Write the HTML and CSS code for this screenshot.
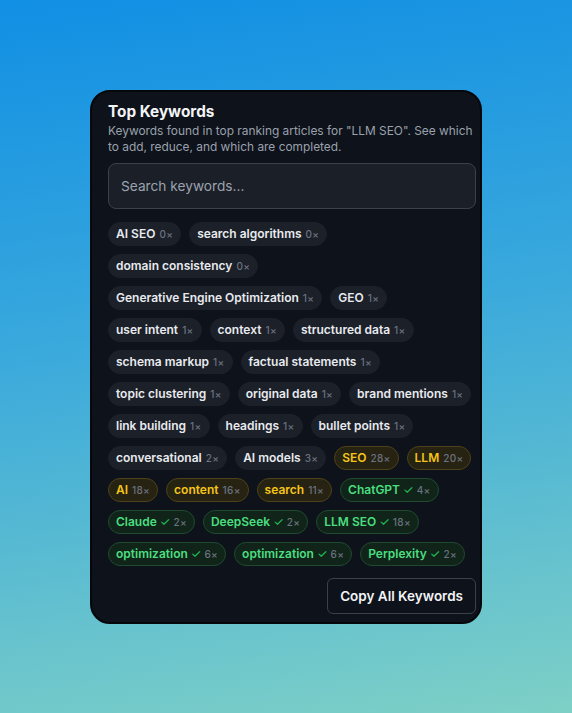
FILE: index.html
```html
<!DOCTYPE html>
<html>
<head>
    <link rel="stylesheet" href="styles.css">
</head>
<body>
    <div class="card">
        <h2 class="title">Top Keywords</h2>
        <p class="desc">Keywords found in top ranking articles for "LLM SEO". See which to add, reduce, and which are completed.</p>
        <input class="search" type="text" placeholder="Search keywords...">

        <div class="tags">
            <span class="tag">AI SEO <small>0×</small></span>
            <span class="tag">search algorithms <small>0×</small></span>
            <span class="tag">domain consistency <small>0×</small></span>
            <span class="tag">Generative Engine Optimization <small>1×</small></span>
            <span class="tag">GEO <small>1×</small></span>
            <span class="tag">user intent <small>1×</small></span>
            <span class="tag">context <small>1×</small></span>
            <span class="tag">structured data <small>1×</small></span>
            <span class="tag">schema markup <small>1×</small></span>
            <span class="tag">factual statements <small>1×</small></span>
            <span class="tag">topic clustering <small>1×</small></span>
            <span class="tag">original data <small>1×</small></span>
            <span class="tag">brand mentions <small>1×</small></span>
            <span class="tag">link building <small>1×</small></span>
            <span class="tag">headings <small>1×</small></span>
            <span class="tag">bullet points <small>1×</small></span>
            <span class="tag">conversational <small>2×</small></span>
            <span class="tag">AI models <small>3×</small></span>
            <span class="tag warn">SEO <small>28×</small></span>
            <span class="tag warn">LLM <small>20×</small></span>
            <span class="tag warn">AI <small>18×</small></span>
            <span class="tag warn">content <small>16×</small></span>
            <span class="tag warn">search <small>11×</small></span>
            <span class="tag done">ChatGPT <i>✓</i> <small>4×</small></span>
            <span class="tag done">Claude <i>✓</i> <small>2×</small></span>
            <span class="tag done">DeepSeek <i>✓</i> <small>2×</small></span>
            <span class="tag done">LLM SEO <i>✓</i> <small>18×</small></span>
            <span class="tag done">optimization <i>✓</i> <small>6×</small></span>
            <span class="tag done">optimization <i>✓</i> <small>6×</small></span>
            <span class="tag done">Perplexity <i>✓</i> <small>2×</small></span>
        </div>

        <div class="actions">
            <button class="copy">Copy All Keywords</button>
        </div>
    </div>
</body>
</html>
```

FILE: styles.css
```css
html, body {
    height: 100%;
}
body {
    margin: 0;
    background: linear-gradient(172deg, #118fe4 0%, #3aa9dc 45%, #7ed0c6 100%);
    font-family: 'Inter', 'Noto Sans', sans-serif;
    padding-top: 90px;
    box-sizing: border-box;
}
.card {
    width: 368px;
    margin-left: 90px;
    background-color: #0e121a;
    border: 2px solid #05070b;
    border-radius: 20px;
    padding: 10px 4px 8px 16px;
    box-sizing: content-box;
}
.title {
    margin: 0;
    color: #f3f4f6;
    font-size: 15.3px;
    font-weight: 700;
    line-height: 20px;
}
.desc {
    margin: 1px 0 0 0;
    color: #9aa1ad;
    font-size: 11.9px;
    line-height: 16px;
    width: 372px;
}
.search {
    display: block;
    width: 368px;
    height: 46px;
    box-sizing: border-box;
    margin-top: 8px;
    background-color: #1a1f28;
    border: 1px solid #3b414c;
    border-radius: 8px;
    padding: 0 12px;
    font-family: inherit;
    font-size: 13.7px;
    color: #e5e7eb;
    outline: none;
}
.search::placeholder {
    color: #9ca3af;
}
.tags {
    display: flex;
    flex-wrap: wrap;
    gap: 8px;
    margin-top: 13px;
    width: 368px;
}
.tag {
    display: inline-block;
    height: 24px;
    line-height: 22px;
    box-sizing: border-box;
    padding: 0 7px;
    border-radius: 12px;
    background-color: #1b2029;
    border: 1px solid #1b2029;
    color: #e8eaee;
    font-size: 12px;
    font-weight: 600;
    white-space: nowrap;
}
.tag small {
    font-size: 10px;
    font-weight: 500;
    color: #6b7280;
    margin-left: 1px;
    letter-spacing: 0.3px;
}
.tag i {
    font-style: normal;
    font-weight: 400;
    font-size: 12px;
    color: #22c55e;
}
.warn {
    background-color: #272313;
    border-color: #4d4219;
    color: #f5c518;
}
.done {
    background-color: #112419;
    border-color: #1f4a30;
    color: #4ade80;
}
.done small {
    margin-left: 0;
}
.actions {
    display: flex;
    justify-content: flex-end;
    width: 368px;
    margin-top: 12px;
}
.copy {
    height: 36px;
    padding: 0 12px;
    background-color: #0e121a;
    border: 1px solid #3b414c;
    border-radius: 6px;
    color: #f3f4f6;
    font-family: inherit;
    font-size: 13.5px;
    font-weight: 600;
}
```
